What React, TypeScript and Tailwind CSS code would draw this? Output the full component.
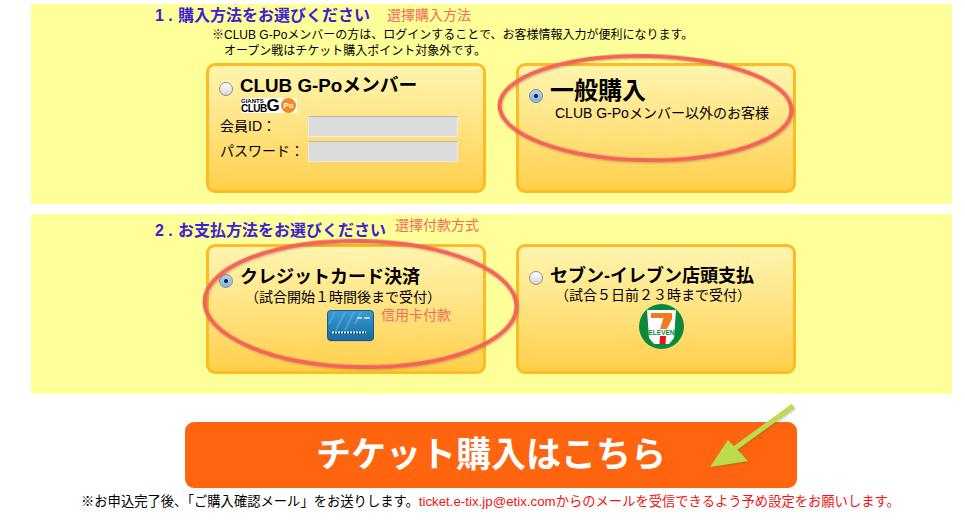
import type { ReactNode } from 'react'

function Radio({ checked, className }: { checked?: boolean; className?: string }) {
  return (
    <span
      className={`flex h-[14px] w-[14px] shrink-0 items-center justify-center rounded-full border border-[#8f8f84] ${
        checked
          ? 'bg-gradient-to-b from-[#b5d6f5] to-[#7fb6ea]'
          : 'bg-gradient-to-b from-[#ffffff] to-[#d6d6d6]'
      } ${className ?? ''}`}
    >
      {checked && <span className="h-[4px] w-[4px] rounded-full bg-[#10182a]" />}
    </span>
  )
}

function Card({ children }: { children: ReactNode }) {
  return (
    <div className="relative h-full w-[280px] rounded-[9px] border-[3px] border-[#ffbb22] bg-gradient-to-b from-[#fff5ae] to-[#ffd048]">
      {children}
    </div>
  )
}

function GpoLogo() {
  return (
    <div className="ml-[32px] flex h-[15px] w-[56px] items-center bg-white">
      <div className="flex w-[24px] flex-col text-black">
        <span className="text-[6px] leading-[6px] font-black">GIANTS</span>
        <span className="text-[10px] leading-[9px] font-black tracking-[-0.5px]">CLUB</span>
      </div>
      <span className="w-[16px] text-center text-[17px] leading-[20px] font-black text-black">G</span>
      <span className="flex h-[15px] w-[15px] shrink-0 items-center justify-center rounded-full bg-[#f58a1f] text-[8px] font-bold text-white">
        Po
      </span>
    </div>
  )
}

function CreditCardIcon() {
  return (
    <svg width="48" height="34" viewBox="0 0 48 34" className="shrink-0">
      <defs>
        <linearGradient id="cardFill" x1="0" y1="0" x2="0" y2="1">
          <stop offset="0" stopColor="#3a9dd4" />
          <stop offset="1" stopColor="#1a6aa3" />
        </linearGradient>
      </defs>
      <rect x="1" y="3" width="46" height="29" rx="3" fill="#e3b85a" opacity="0.7" />
      <rect x="0.5" y="0.5" width="46" height="30" rx="3" fill="url(#cardFill)" stroke="#175c8e" />
      <path d="M8 2 L2 14 M18 2 L9 20 M27 2 L18 20 M34 2 L28 14" stroke="#69bde8" strokeWidth="2" opacity="0.45" />
      <path d="M30 8 h5 M37 8 h6" stroke="#d9eef9" strokeWidth="1.5" />
      <path d="M5 23 h34" stroke="#0f3e63" strokeWidth="2" />
      <path d="M5 22.5 h34" stroke="#e6f4fb" strokeWidth="2" strokeDasharray="2 1" />
    </svg>
  )
}

function SevenElevenIcon() {
  return (
    <svg width="45" height="45" viewBox="0 0 45 45" className="shrink-0">
      <circle cx="22.5" cy="22.5" r="22.5" fill="#0b8a3e" />
      <path d="M8 6 H37 L35 34 L30 40 H15 L10 34 Z" fill="#ffffff" />
      <rect x="12" y="9" width="21" height="5" fill="#f47a20" />
      <path d="M26 9 H33 V15 L28 25 H21 Z" fill="#f47a20" />
      <text x="22.5" y="30.5" textAnchor="middle" fontSize="6.5" fontWeight="900" fill="#0b8a3e">
        ELEVEN
      </text>
      <path d="M21 32 H27 L26.5 40 H20.5 Z" fill="#e8141c" />
    </svg>
  )
}

function SectionTitle({ num, width, children }: { num: string; width: string; children: ReactNode }) {
  return (
    <h2 className={`flex text-[16px] leading-[22px] font-bold text-[#3a22d0] ${width}`}>
      <span className="w-[23px]">{num}</span>
      {children}
    </h2>
  )
}

export default function App() {
  return (
    <div
      className="relative h-[530px] w-[965px] overflow-hidden bg-white pt-[4px] text-black"
      style={{ fontFamily: '"Liberation Sans", "Noto Sans CJK JP", sans-serif' }}
    >
      <section className="ml-[31px] h-[200px] w-[921px] bg-[#ffff99]">
        <div className="flex h-[23px] items-center pl-[124px]">
          <SectionTitle num="1 ." width="w-[232px]">
            購入方法をお選びください
          </SectionTitle>
          <span className="text-[14px] text-[#f56a5a]">選擇購入方法</span>
        </div>
        <p className="ml-[181px] text-[12px] leading-[16px]">
          ※CLUB G-Poメンバーの方は、ログインすることで、お客様情報入力が便利になります。
        </p>
        <p className="ml-[193px] text-[12px] leading-[16px]">オープン戦はチケット購入ポイント対象外です。</p>

        <div className="ml-[175px] mt-[4px] flex h-[130px] gap-[30px]">
          <Card>
            <div className="flex items-start pl-[10px] pt-[8px]">
              <Radio className="mt-[8px]" />
              <span className="ml-[7px] text-[18.8px] leading-[24px] font-bold">CLUB G-Poメンバー</span>
            </div>
            <GpoLogo />
            <div className="mt-[3px] flex items-center pl-[11px]">
              <span className="w-[88px] text-[14px]">会員ID：</span>
              <div className="h-[21px] w-[150px] border border-[#ececec] border-t-[#b5b5b5] bg-[#dcdcdc]" />
            </div>
            <div className="mt-[4px] flex items-center pl-[11px]">
              <span className="w-[88px] text-[14px]">パスワード：</span>
              <div className="h-[21px] w-[150px] border border-[#ececec] border-t-[#b5b5b5] bg-[#dcdcdc]" />
            </div>
          </Card>
          <Card>
            <div className="flex items-start pl-[10px] pt-[11px]">
              <Radio checked className="mt-[12px]" />
              <span className="ml-[7px] text-[24px] leading-[28px] font-bold">一般購入</span>
            </div>
            <p className="ml-[36px] text-[14px] leading-[16px]">CLUB G-Poメンバー以外のお客様</p>
          </Card>
        </div>
      </section>

      <section className="ml-[31px] mt-[10px] h-[180px] w-[921px] bg-[#ffff99]">
        <div className="flex h-[30px] pl-[124px]">
          <div className="mt-[6px]">
            <SectionTitle num="2 ." width="w-[240px]">
              お支払方法をお選びください
            </SectionTitle>
          </div>
          <span className="text-[14px] leading-[22px] text-[#f56a5a]">選擇付款方式</span>
        </div>
        <div className="ml-[175px] flex h-[130px] gap-[30px]">
          <Card>
            <div className="flex items-start pl-[10px] pt-[18px]">
              <Radio checked className="mt-[9px]" />
              <span className="ml-[7px] text-[18px] leading-[24px] font-bold">クレジットカード決済</span>
            </div>
            <p className="ml-[36px] text-[14px] leading-[16px]">（試合開始１時間後まで受付）</p>
            <div className="ml-[118px] mt-[5px] flex items-start gap-[6px]">
              <CreditCardIcon />
              <span className="-mt-[3px] text-[14px] leading-[16px] text-[#f56a5a]">信用卡付款</span>
            </div>
          </Card>
          <Card>
            <div className="flex items-start pl-[10px] pt-[17px]">
              <Radio className="mt-[7px]" />
              <span className="ml-[7px] text-[18px] leading-[24px] font-bold">セブン-イレブン店頭支払</span>
            </div>
            <p className="-mt-[1px] ml-[36px] text-[14px] leading-[16px]">（試合５日前２３時まで受付）</p>
            <div className="ml-[120px] mt-[1px]">
              <SevenElevenIcon />
            </div>
          </Card>
        </div>
      </section>

      <button className="ml-[185px] mt-[28px] flex h-[66px] w-[612px] items-center justify-center rounded-[9px] bg-[#ff640f] text-[35px] font-bold text-white">
        チケット購入はこちら
      </button>
      <p className="ml-[81px] mt-[6px] whitespace-nowrap text-[13.3px] leading-[16px]">
        ※お申込完了後、「ご購入確認メール」をお送りします。
        <span className="text-[#f01414]">ticket.e-tix.jp@etix.comからのメールを受信できるよう予め設定をお願いします。</span>
      </p>

      {/* hand drawn marks over the page */}
      <svg width="965" height="530" className="pointer-events-none absolute left-0 top-0">
        <defs>
          <filter id="markShadow" x="-10%" y="-10%" width="120%" height="120%">
            <feDropShadow dx="1" dy="1" stdDeviation="0.8" floodColor="#6b5a20" floodOpacity="0.4" />
          </filter>
        </defs>
        <ellipse cx="645.5" cy="108" rx="146" ry="52" transform="rotate(1 645 108)" fill="none" stroke="#f4645a" strokeWidth="4" filter="url(#markShadow)" />
        <ellipse cx="360.5" cy="304" rx="156" ry="63" transform="rotate(1 360 304)" fill="none" stroke="#f4645a" strokeWidth="4" filter="url(#markShadow)" />
        <g filter="url(#markShadow)">
          <path d="M793 406 L730 452" stroke="#bcdc50" strokeWidth="5" />
          <path d="M710 467 L728 440 L748 461 Z" fill="#bcdc50" />
        </g>
      </svg>
    </div>
  )
}
